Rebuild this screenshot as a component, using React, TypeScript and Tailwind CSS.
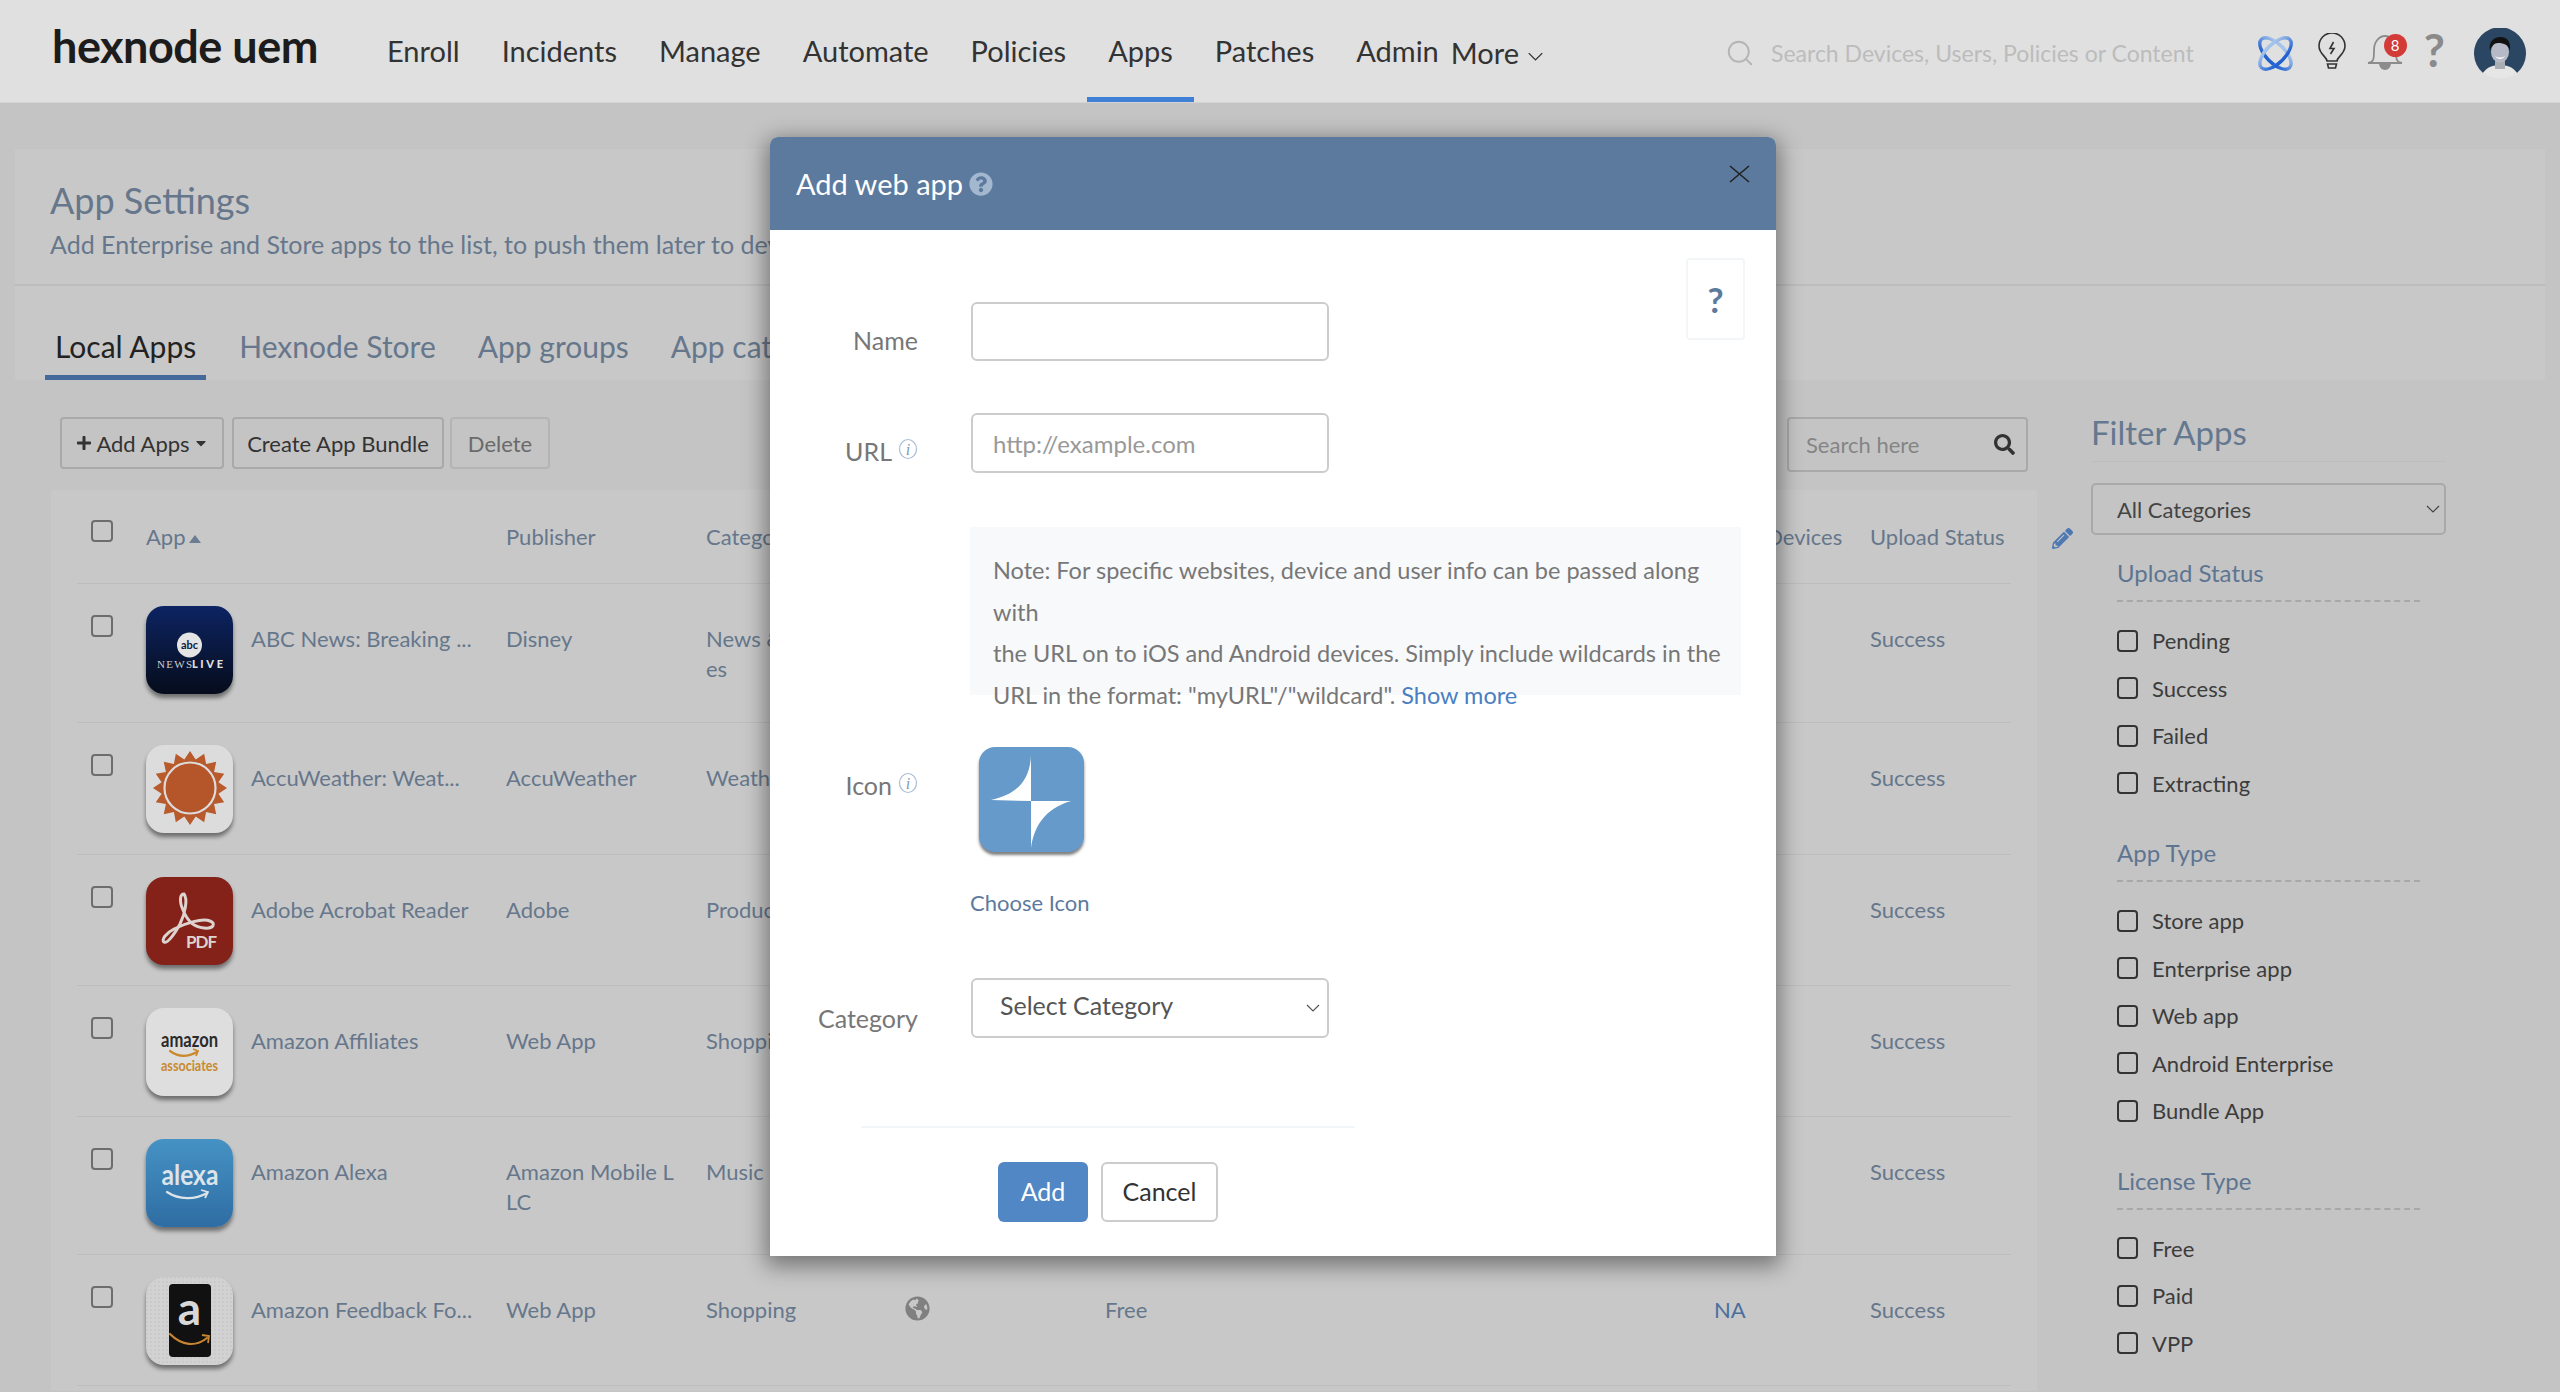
import { ReactNode } from 'react';
import { FaCaretDown, FaGlobeAmericas, FaPencilAlt, FaPlus, FaQuestionCircle, FaSearch } from 'react-icons/fa';
import { Search } from 'lucide-react';

const NAV = ['Enroll', 'Incidents', 'Manage', 'Automate', 'Policies', 'Apps', 'Patches', 'Admin'];

const SUN_POINTS = Array.from({ length: 32 }, (_, i) => {
  const a = (i * Math.PI) / 16 - Math.PI / 2;
  const r = i % 2 === 0 ? 37 : 29;
  return `${(44 + r * Math.cos(a)).toFixed(1)},${(43 + r * Math.sin(a)).toFixed(1)}`;
}).join(' ');

function Chevron({ className }: { className?: string }) {
  return (
    <svg viewBox="0 0 14 8" fill="none" stroke="currentColor" strokeWidth="1.2" className={className}>
      <path d="M1 1l6 6 6-6" />
    </svg>
  );
}

function Smile({ d, color, arrow }: { d: string; color: string; arrow: string }) {
  return (
    <>
      <path d={d} fill="none" stroke={color} strokeWidth="2.2" strokeLinecap="round" />
      <path d={arrow} fill="none" stroke={color} strokeWidth="1.8" />
    </>
  );
}

function IconFrame({ className, children }: { className: string; children: ReactNode }) {
  return (
    <div className={`h-[88px] w-[87px] shrink-0 overflow-hidden rounded-[18px] shadow-[0_4px_4px_rgba(0,0,0,0.45)] ${className}`}>
      <svg viewBox="0 0 87 88" className="h-full w-full">
        {children}
      </svg>
    </div>
  );
}

function AbcIcon() {
  return (
    <IconFrame className="bg-gradient-to-b from-[#0d2464] to-[#060c1c]">
      <circle cx="43.5" cy="39" r="12.5" fill="#e4e4e4" />
      <text x="43.5" y="42.5" textAnchor="middle" fontSize="11" fontWeight="700" fill="#0b1a45">abc</text>
      <text x="11" y="62" fontSize="11" fontFamily="Liberation Serif, serif" fill="#cfcfcf" textLength="35">NEWS</text>
      <text x="46" y="62" fontSize="11" fontWeight="900" fill="#e0e0e0" textLength="31">LIVE</text>
    </IconFrame>
  );
}

function SunIcon() {
  return (
    <IconFrame className="bg-[#dcdcdc]">
      <polygon points={SUN_POINTS} fill="#b85a2b" />
      <circle cx="44" cy="43" r="25.5" fill="#b5562a" stroke="#dcdcdc" strokeWidth="2.2" />
    </IconFrame>
  );
}

function PdfIcon() {
  return (
    <IconFrame className="bg-[#84221a]">
      <path
        d="M38 17C34 17 33 24 37 33C42 45 48 50 58 51C68 52 70 46 64 44C56 41 40 46 28 52C20 56 15 63 18 65C21 67 28 58 34 47C39 37 42 22 38 17Z"
        fill="none"
        stroke="#ddd3cf"
        strokeWidth="3"
      />
      <text x="40" y="71" fontSize="17" fontWeight="700" fill="#ddd3cf" textLength="31">PDF</text>
    </IconFrame>
  );
}

function AssociatesIcon() {
  return (
    <IconFrame className="bg-[#dedede]">
      <text x="15" y="39" fontSize="21" fontWeight="700" fill="#2b2b2b" textLength="57" lengthAdjust="spacingAndGlyphs">amazon</text>
      <Smile d="M24 43c8 6 18 6 27 1" color="#c98a2e" arrow="M47 41l5 2-2 5" />
      <text x="15" y="63" fontSize="16" fontWeight="700" fill="#c98a2e" textLength="57" lengthAdjust="spacingAndGlyphs">associates</text>
    </IconFrame>
  );
}

function AlexaIcon() {
  return (
    <IconFrame className="bg-gradient-to-b from-[#4692c4] to-[#2e6da3]">
      <text x="15.5" y="46" fontSize="29" fontWeight="700" fill="#dce4ea" textLength="57" lengthAdjust="spacingAndGlyphs">alexa</text>
      <Smile d="M21 53c12 8 28 8 40 1" color="#dce4ea" arrow="M55 51l7 2-3 6" />
    </IconFrame>
  );
}

function AmazonIcon() {
  return (
    <IconFrame className="bg-[#d2d2d2]">
      <defs>
        <pattern id="dots" width="4" height="4" patternUnits="userSpaceOnUse">
          <circle cx="1" cy="1" r="0.7" fill="#bdbdbd" />
        </pattern>
      </defs>
      <rect width="87" height="88" fill="url(#dots)" />
      <rect x="23" y="7" width="42" height="73" rx="4" fill="#111" />
      <text x="43.5" y="48" textAnchor="middle" fontSize="46" fontWeight="700" fill="#d8d8d8">a</text>
      <Smile d="M24 57c12 12 26 13 37 4" color="#c8842e" arrow="M56 58l7 1-1 7" />
    </IconFrame>
  );
}

const ROWS = [
  { icon: <AbcIcon />, name: 'ABC News: Breaking ...', publisher: 'Disney', category: 'News & Magazines', height: 'h-[139px]' },
  { icon: <SunIcon />, name: 'AccuWeather: Weat...', publisher: 'AccuWeather', category: 'Weather', height: 'h-[132px]' },
  { icon: <PdfIcon />, name: 'Adobe Acrobat Reader', publisher: 'Adobe', category: 'Productivity', height: 'h-[131px]' },
  { icon: <AssociatesIcon />, name: 'Amazon Affiliates', publisher: 'Web App', category: 'Shopping', height: 'h-[131px]' },
  { icon: <AlexaIcon />, name: 'Amazon Alexa', publisher: 'Amazon Mobile LLC', category: 'Music & Audio', height: 'h-[138px]' },
  { icon: <AmazonIcon />, name: 'Amazon Feedback Fo...', publisher: 'Web App', category: 'Shopping', height: 'h-[131px]' },
];

const FILTERS = [
  { title: 'Upload Status', items: ['Pending', 'Success', 'Failed', 'Extracting'] },
  { title: 'App Type', items: ['Store app', 'Enterprise app', 'Web app', 'Android Enterprise', 'Bundle App'] },
  { title: 'License Type', items: ['Free', 'Paid', 'VPP'] },
];

const GRID = 'grid grid-cols-[69px_360px_200px_199px_200px_609px_156px_141px]';

function InfoMark() {
  return (
    <svg viewBox="0 0 20 24" className="h-[24px] w-[20px] shrink-0">
      <ellipse cx="10" cy="12" rx="8.5" ry="9.5" fill="none" stroke="#a9bdd4" strokeWidth="1.2" />
      <text x="10" y="18" textAnchor="middle" fontSize="16" fontStyle="italic" fontFamily="Liberation Serif, serif" fill="#7f9ab9">i</text>
    </svg>
  );
}

function Header() {
  return (
    <header className="flex h-[103px] items-stretch border-b border-[#d4d4d4] bg-[#e0e0e0]">
      <div className="ml-[52px] mr-[42px] flex w-[272px] items-center pb-[10px] text-[45px] leading-none font-bold tracking-[-0.5px] text-[#1c1c1c]">hexnode uem</div>
      <nav className="flex items-stretch text-[29px] text-[#333]">
        {NAV.map((item) => (
          <a key={item} className={`flex items-center border-b-[5px] px-[21px] pt-[4px] ${item === 'Apps' ? 'border-[#3f7fd6]' : 'border-transparent'}`}>
            {item}
          </a>
        ))}
        <a className="ml-[-9px] flex items-center gap-[8px] pt-[4px]">
          More
          <Chevron className="mt-[6px] h-[9px] w-[17px]" />
        </a>
      </nav>
      <div className="ml-[181px] flex items-center gap-[16px] pt-[4px]">
        <Search className="h-[30px] w-[30px] text-[#b4b4b4]" strokeWidth={1.5} />
        <span className="text-[23px] text-[#bcbcbc]">Search Devices, Users, Policies or Content</span>
      </div>
      <div className="relative flex-1">
        <svg viewBox="0 0 37 37" className="absolute left-[63px] top-[35px] h-[37px] w-[37px]">
          <defs>
            <linearGradient id="atom" x1="0" y1="0" x2="0" y2="1">
              <stop offset="0" stopColor="#a9c6ea" />
              <stop offset="1" stopColor="#1f5fd0" />
            </linearGradient>
          </defs>
          <ellipse cx="18.5" cy="18.5" rx="20" ry="9.5" transform="rotate(45 18.5 18.5)" fill="none" stroke="url(#atom)" strokeWidth="3.4" />
          <ellipse cx="18.5" cy="18.5" rx="20" ry="9.5" transform="rotate(-45 18.5 18.5)" fill="none" stroke="url(#atom)" strokeWidth="3.4" />
        </svg>
        <svg viewBox="0 0 30 38" fill="none" stroke="#333" strokeWidth="1.6" className="absolute left-[123px] top-[33px] h-[38px] w-[30px]">
          <path d="M10 28c0-4-8-7-8-15a13 13 0 0126 0c0 8-8 11-8 15z" />
          <path d="M10.5 31h9M11.5 35h7l1-4h-9z" />
          <path d="M16.5 9l-3.5 6.5h4L13.5 21" />
        </svg>
        <svg viewBox="0 0 36 38" fill="none" stroke="#8c8c8c" strokeWidth="1.8" className="absolute left-[173px] top-[34px] h-[38px] w-[36px]">
          <path d="M1 29c6-1 6-4 6-13 0-8 5-14 11-14s11 6 11 14c0 9 0 12 6 13z" />
          <path d="M13 30a5 5 0 0010 0z" fill="#8c8c8c" />
        </svg>
        <span className="absolute left-[190px] top-[34px] flex h-[23px] w-[23px] items-center justify-center rounded-full bg-[#d23b38] text-[15px] leading-none text-white">8</span>
        <span className="absolute left-[230px] top-[22px] text-[46px] leading-[56px] font-bold text-[#8a8a8a]">?</span>
        <svg viewBox="0 0 52 50" className="absolute left-[280px] top-[28px] h-[50px] w-[52px]">
          <path d="M9 45A26 26 0 1143 45C38 39 14 39 9 45Z" fill="#2b4662" />
          <path d="M9 45c4-6 10-8 17-8s13 2 17 8c-4 3-11 5-17 5s-13-2-17-5z" fill="#e6e6e6" />
          <rect x="21" y="31" width="10" height="10" fill="#a9adb4" />
          <ellipse cx="26" cy="24" rx="9" ry="10.5" fill="#b6bac6" />
          <path d="M16 23c-2-9 4-14 10-14 7 0 11 4 10 14-1-6-6-8-12-8-4 0-7 3-8 8z" fill="#111" />
          <path d="M21 28c3 2 7 2 10 0-2 4-8 4-10 0z" fill="#fff" />
        </svg>
      </div>
    </header>
  );
}

function AppTable() {
  return (
    <section className="mt-[22px] h-[901px] bg-[#c8c8c8] px-[26px] text-[22px] leading-[30px] text-[#66778c]">
      <div className={`${GRID} h-[94px] border-b border-[#bdbdbd]`}>
        <div className="pl-[14px] pt-[29px]">
          <input type="checkbox" className="h-[22px] w-[22px] appearance-none rounded-[4px] border-2 border-[#6d6d6d]" />
        </div>
        <div className="flex items-start gap-[3px] pt-[32px]">
          App
          <svg viewBox="0 0 12 8" className="mt-[13px] h-[8px] w-[12px]"><path d="M6 0l6 8H0z" fill="#6c7d93" /></svg>
        </div>
        <div className="pt-[32px]">Publisher</div>
        <div className="pt-[32px]">Category</div>
        <div className="pt-[32px]">Type</div>
        <div className="pt-[32px]">License</div>
        <div className="pt-[32px]">Total Devices</div>
        <div className="pt-[32px]">Upload Status</div>
      </div>
      {ROWS.map((row) => (
        <div key={row.name} className={`${GRID} ${row.height} border-b border-[#bdbdbd]`}>
          <div className="pl-[14px] pt-[30px]">
            <input type="checkbox" className="h-[22px] w-[22px] appearance-none rounded-[4px] border-2 border-[#6d6d6d]" />
          </div>
          <div className="flex items-start gap-[18px] pt-[22px]">
            {row.icon}
            <span className="pt-[18px] whitespace-nowrap">{row.name}</span>
          </div>
          <div className="w-[172px] break-all pt-[40px]">{row.publisher}</div>
          <div className="w-[172px] break-all pt-[40px]">{row.category}</div>
          <div className="pt-[41px]">
            <FaGlobeAmericas className="h-[25px] w-[25px] text-[#808080]" />
          </div>
          <div className="pt-[40px]">Free</div>
          <div className="pt-[40px] text-[#4a6f9f]">NA</div>
          <div className="pt-[40px]">Success</div>
        </div>
      ))}
    </section>
  );
}

function FilterPanel() {
  return (
    <aside className="w-[355px] shrink-0 pt-[32px]">
      <h2 className="border-b border-[#bdbdbd] pb-[9px] text-[33px] leading-[40px] text-[#64788f]">Filter Apps</h2>
      <div className="relative mt-[21px]">
        <select className="h-[52px] w-full appearance-none rounded-[5px] border-2 border-[#a9a9a9] pl-[24px] text-[22px] text-[#444]">
          <option>All Categories</option>
        </select>
        <Chevron className="pointer-events-none absolute right-[6px] top-[22px] h-[8px] w-[14px] text-[#444]" />
      </div>
      {FILTERS.map((group, i) => (
        <div key={group.title} className={`ml-[26px] w-[303px] ${i === 0 ? 'mt-[24px]' : 'mt-[32px]'}`}>
          <h3 className="border-b-2 border-dashed border-[#a8a8a8] pb-[13px] text-[24px] leading-[28px] text-[#5e7592]">{group.title}</h3>
          <div className="mt-[15px]">
            {group.items.map((item) => (
              <label key={item} className="flex h-[47.5px] items-center gap-[14px] text-[22px] text-[#3c3c3c]">
                <input type="checkbox" className="h-[22px] w-[21px] appearance-none rounded-[4px] border-2 border-[#333]" />
                {item}
              </label>
            ))}
          </div>
        </div>
      ))}
    </aside>
  );
}

function WebAppModal() {
  return (
    <div className="absolute left-[770px] top-[137px] h-[1119px] w-[1006px] rounded-t-[8px] bg-white shadow-[0_6px_22px_4px_rgba(0,0,0,0.42)]">
      <div className="relative flex h-[93px] items-center gap-[6px] rounded-t-[8px] bg-[#5b7a9e] pl-[26px] text-[29px] text-white">
        Add web app
        <FaQuestionCircle className="h-[24px] w-[24px] text-[#a3b7cf]" />
        <svg viewBox="0 0 21 18" fill="none" stroke="#222" strokeWidth="1.6" className="absolute right-[26px] top-[28px] h-[18px] w-[21px]">
          <path d="M1 1l19 16M20 1L1 17" />
        </svg>
      </div>
      <div className="relative px-[0px] text-[25px] text-[#777]">
        <div className="absolute right-[31px] top-[28px] flex h-[82px] w-[59px] items-center justify-center rounded-[4px] border-2 border-[#f3f6f8] text-[35px] font-bold text-[#5b7a9e]">?</div>
        <div className="flex pt-[72px]">
          <div className="w-[148px] pt-[20px] text-right">Name</div>
          <input className="ml-[53px] h-[59px] w-[358px] rounded-[6px] border-2 border-[#ccc] bg-white" />
        </div>
        <div className="mt-[52px] flex">
          <div className="flex w-[148px] justify-end gap-[6px] pt-[20px]">
            URL
            <span className="pt-[4px]"><InfoMark /></span>
          </div>
          <input placeholder="http://example.com" className="ml-[53px] h-[60px] w-[358px] rounded-[6px] border-2 border-[#ccc] bg-white pl-[20px] text-[24px] placeholder:text-[#999]" />
        </div>
        <div className="ml-[200px] mt-[54px] h-[168px] w-[771px] bg-[#f7f9fb] pl-[23px] pt-[23px] text-[23.5px] leading-[41.5px] text-[#777]">
          Note: For specific websites, device and user info can be passed along with<br />
          the URL on to iOS and Android devices. Simply include wildcards in the<br />
          URL in the format: "myURL"/"wildcard". <a className="text-[#4a7fc1]">Show more</a>
        </div>
        <div className="mt-[52px] flex">
          <div className="flex w-[148px] justify-end gap-[6px] pt-[20px]">
            Icon
            <span className="pt-[4px]"><InfoMark /></span>
          </div>
          <div className="ml-[52px]">
            <div className="ml-[9px] h-[105px] w-[105px] rounded-[16px] bg-[#659acb] shadow-[0_3px_3px_rgba(0,0,0,0.5)]">
              <svg viewBox="0 0 105 105" className="h-full w-full" fill="#fff">
                <path d="M52 8C51 35 36 48 12 53L52 54Z" />
                <path d="M92 54L52 54L52 101C55 80 65 62 92 54Z" />
              </svg>
            </div>
            <div className="mt-[37px] text-[22px] leading-[28px] text-[#5d7a9e]">Choose Icon</div>
          </div>
        </div>
        <div className="mt-[61px] flex">
          <div className="w-[148px] pt-[22px] text-right">Category</div>
          <div className="relative ml-[53px]">
            <select className="h-[60px] w-[358px] appearance-none rounded-[6px] border-2 border-[#ccc] bg-white pb-[4px] pl-[27px] text-[#555]">
              <option>Select Category</option>
            </select>
            <Chevron className="pointer-events-none absolute right-[9px] top-[26px] h-[8px] w-[14px] text-[#555]" />
          </div>
        </div>
        <div className="ml-[91px] mt-[88px] h-[2px] w-[494px] bg-[#f2f6f9]" />
        <div className="ml-[228px] mt-[34px] flex gap-[13px]">
          <button className="h-[60px] w-[90px] rounded-[6px] bg-[#5287c5] text-white">Add</button>
          <button className="h-[60px] w-[117px] rounded-[6px] border-2 border-[#ccc] text-[#333]">Cancel</button>
        </div>
      </div>
    </div>
  );
}

export default function App() {
  return (
    <div className="relative h-[1392px] overflow-hidden bg-[#c4c4c4] font-['Lato',sans-serif]">
      <Header />
      <main className="px-[15px] pt-[46px]">
        <div className="h-[231px] bg-[#c8c8c8]">
          <div className="h-[137px] border-b-2 border-[#bdbdbd] pl-[35px] pt-[28px]">
            <h1 className="text-[36px] leading-[46px] text-[#66778c]">App Settings</h1>
            <p className="mt-[5px] text-[25px] leading-[32px] text-[#66778c]">Add Enterprise and Store apps to the list, to push them later to devices.</p>
          </div>
          <div className="flex h-[94px] items-end gap-[0px] pl-[30px] text-[30px] text-[#66778c]">
            <a className="border-b-[5px] border-[#45699b] px-[10px] pb-[6px] text-[#222]">Local Apps</a>
            <a className="ml-[33px] pb-[11px]">Hexnode Store</a>
            <a className="ml-[42px] pb-[11px]">App groups</a>
            <a className="ml-[42px] pb-[11px]">App catalog</a>
          </div>
        </div>
        <div className="flex">
          <div className="ml-[36px] w-[1986px] shrink-0">
            <div className="flex h-[88px] items-start justify-between px-[9px] pt-[37px] text-[22px]">
              <div className="flex">
                <button className="flex h-[52px] w-[164px] items-center justify-center gap-[4px] rounded-[4px] border-2 border-[#a9a9a9] text-[#333]">
                  <FaPlus className="h-[16px] w-[16px]" />
                  Add Apps
                  <FaCaretDown className="h-[16px] w-[14px]" />
                </button>
                <button className="ml-[8px] h-[52px] w-[212px] rounded-[4px] border-2 border-[#a9a9a9] text-[#333]">Create App Bundle</button>
                <button className="ml-[6px] h-[52px] w-[100px] rounded-[4px] border-2 border-[#b4b4b4] text-[#6a6a6a]">Delete</button>
              </div>
              <div className="flex h-[55px] w-[241px] items-center justify-between rounded-[4px] border-2 border-[#a9a9a9] pl-[17px] pr-[11px]">
                <span className="text-[#858585]">Search here</span>
                <FaSearch className="h-[21px] w-[21px] text-[#333]" />
              </div>
            </div>
            <AppTable />
          </div>
          <div className="w-[54px] shrink-0 pl-[15px] pt-[148px]">
            <FaPencilAlt className="h-[21px] w-[21px] text-[#4d78b2]" />
          </div>
          <FilterPanel />
        </div>
      </main>
      <WebAppModal />
    </div>
  );
}
